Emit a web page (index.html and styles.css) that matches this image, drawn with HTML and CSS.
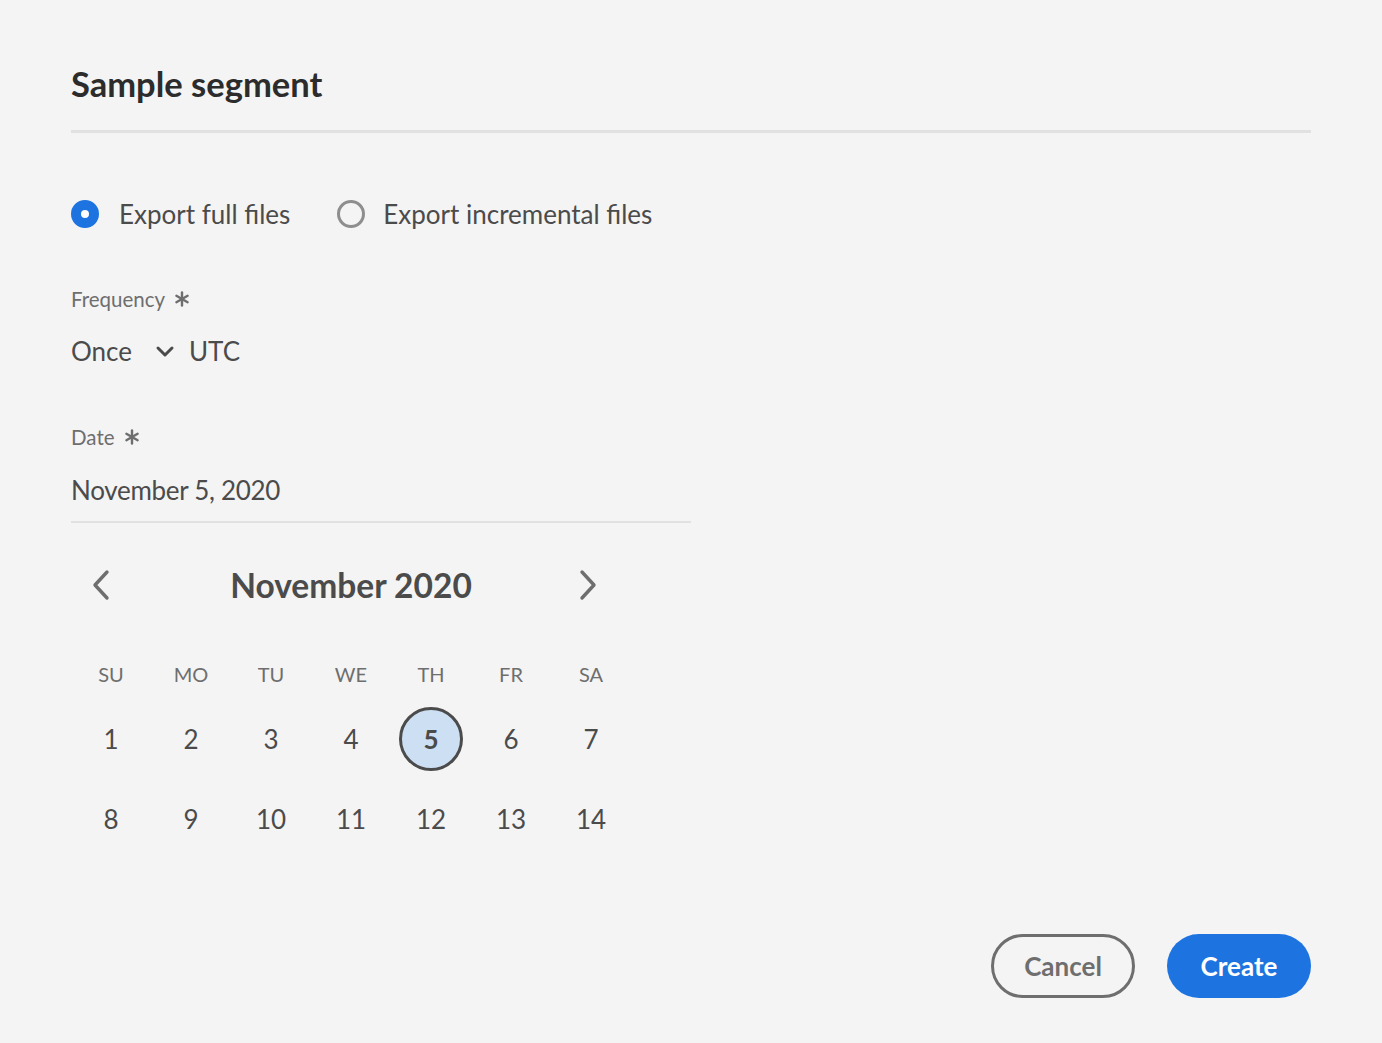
FILE: index.html
```html
<!DOCTYPE html>
<html lang="en">
<head>
<meta charset="utf-8">
<title>Sample segment</title>
<link rel="stylesheet" href="styles.css">
</head>
<body>
<div class="dialog">
  <h1 class="title">Sample segment</h1>
  <div class="divider"></div>

  <div class="radios">
    <label class="radio">
      <span class="radio-btn checked"></span>
      <span class="radio-text">Export full files</span>
    </label>
    <label class="radio">
      <span class="radio-btn"></span>
      <span class="radio-text">Export incremental files</span>
    </label>
  </div>

  <div class="label label-freq">Frequency
    <svg class="req" width="16" height="16" viewBox="0 0 16 16"><g stroke="#6e6e6e" stroke-width="2.4" stroke-linecap="round"><line x1="8" y1="1.5" x2="8" y2="14.5"/><line x1="2.4" y1="4.8" x2="13.6" y2="11.2"/><line x1="2.4" y1="11.2" x2="13.6" y2="4.8"/></g></svg>
  </div>
  <div class="freq-row">
    <span class="value">Once</span>
    <svg class="chev-down" width="20" height="14" viewBox="0 0 20 14"><polyline points="3,4 10,11 17,4" fill="none" stroke="#4b4b4b" stroke-width="3" stroke-linecap="round" stroke-linejoin="round"/></svg>
    <span class="value">UTC</span>
  </div>

  <div class="label label-date">Date
    <svg class="req" width="16" height="16" viewBox="0 0 16 16"><g stroke="#6e6e6e" stroke-width="2.4" stroke-linecap="round"><line x1="8" y1="1.5" x2="8" y2="14.5"/><line x1="2.4" y1="4.8" x2="13.6" y2="11.2"/><line x1="2.4" y1="11.2" x2="13.6" y2="4.8"/></g></svg>
  </div>
  <div class="date-field"><span class="value date-value">November 5, 2020</span></div>

  <div class="calendar">
    <div class="cal-head">
      <button class="nav prev" aria-label="Previous">
        <svg width="20" height="32" viewBox="0 0 20 32"><polyline points="16,3 4,16 16,29" fill="none" stroke="#6e6e6e" stroke-width="3.4" stroke-linecap="round" stroke-linejoin="round"/></svg>
      </button>
      <div class="cal-title">November 2020</div>
      <button class="nav next" aria-label="Next">
        <svg width="20" height="32" viewBox="0 0 20 32"><polyline points="4,3 16,16 4,29" fill="none" stroke="#6e6e6e" stroke-width="3.4" stroke-linecap="round" stroke-linejoin="round"/></svg>
      </button>
    </div>
    <div class="weekdays">
      <span>SU</span><span>MO</span><span>TU</span><span>WE</span><span>TH</span><span>FR</span><span>SA</span>
    </div>
    <div class="days">
      <span class="day">1</span><span class="day">2</span><span class="day">3</span><span class="day">4</span><span class="day selected">5</span><span class="day">6</span><span class="day">7</span>
      <span class="day">8</span><span class="day">9</span><span class="day">10</span><span class="day">11</span><span class="day">12</span><span class="day">13</span><span class="day">14</span>
    </div>
  </div>

  <div class="footer">
    <button class="btn btn-cancel">Cancel</button>
    <button class="btn btn-create">Create</button>
  </div>
</div>
</body>
</html>
```

FILE: styles.css
```css
* { box-sizing: border-box; }
html, body {
  margin: 0;
  padding: 0;
  background: #f4f4f4;
}
body {
  font-family: Lato, "Open Sans", sans-serif;
  color: #4b4b4b;
  width: 1382px;
  height: 1043px;
  overflow: hidden;
}
.dialog {
  padding: 60px 71px 0;
}
.title {
  margin: 0;
  height: 48px;
  line-height: 48px;
  font-size: 34.5px;
  font-weight: 700;
  color: #2c2c2c;
}
.divider {
  margin-top: 22px;
  height: 3px;
  background: #e1e1e1;
}
.radios {
  margin-top: 57px;
  height: 48px;
  display: flex;
  align-items: center;
  gap: 47px;
}
.radio {
  display: flex;
  align-items: center;
  gap: 20px;
}
.radio + .radio { gap: 18px; }
.radio-btn {
  width: 28px;
  height: 28px;
  border-radius: 50%;
  border: 3px solid #8e8e8e;
  background: #f4f4f4;
}
.radio-btn.checked {
  border: 10px solid #1d74e0;
  background: #fff;
}
.radio-text {
  font-size: 26px;
  line-height: 40px;
  color: #4b4b4b;
}
.label {
  height: 24px;
  display: flex;
  align-items: center;
  gap: 9px;
  font-size: 20.5px;
  color: #6e6e6e;
}
.label-freq { margin-top: 49px; }
.label-date { margin-top: 54px; }
.req { display: block; }
.value {
  font-size: 26px;
  line-height: 40px;
  color: #4b4b4b;
}
.freq-row {
  margin-top: 20px;
  height: 40px;
  display: flex;
  align-items: center;
}
.chev-down {
  margin-left: 23px;
  margin-right: 14px;
  display: block;
}
.date-field {
  margin-top: 21px;
  width: 620px;
  height: 53px;
  padding-bottom: 11px;
  border-bottom: 2px solid #e1e1e1;
}
.date-field .value { display: block; }
.date-value { letter-spacing: -0.3px; }
.calendar {
  width: 560px;
  margin-top: 38px;
}
.cal-head {
  height: 48px;
  display: grid;
  grid-template-columns: 1fr auto 1fr;
  align-items: center;
}
.nav {
  border: 0;
  background: none;
  padding: 0;
  width: 40px;
  height: 40px;
  display: flex;
  align-items: center;
  justify-content: center;
  cursor: pointer;
}
.nav.prev { justify-self: start; margin-left: 10px; }
.nav.next { justify-self: end; margin-right: 23px; }
.cal-title {
  font-size: 33.5px;
  font-weight: 700;
  color: #4b4b4b;
}
.weekdays {
  margin-top: 45px;
  height: 40px;
  display: grid;
  grid-template-columns: repeat(7, 80px);
  align-items: center;
  justify-items: center;
  font-size: 20px;
  color: #6e6e6e;
}
.days {
  margin-top: 5px;
  display: grid;
  grid-template-columns: repeat(7, 80px);
  grid-auto-rows: 80px;
  align-items: center;
  justify-items: center;
}
.day {
  width: 64px;
  height: 64px;
  border-radius: 50%;
  display: flex;
  align-items: center;
  justify-content: center;
  font-size: 26px;
  color: #4b4b4b;
}
.day.selected {
  background: #cddff3;
  border: 3px solid #4b4b4b;
  font-weight: 700;
}
.footer {
  margin-top: 75px;
  display: flex;
  justify-content: flex-end;
  gap: 32px;
}
.btn {
  width: 144px;
  height: 64px;
  border-radius: 32px;
  font-family: Lato, "Open Sans", sans-serif;
  font-size: 26px;
  font-weight: 700;
  cursor: pointer;
}
.btn-cancel {
  background: transparent;
  border: 3px solid #6e6e6e;
  color: #6e6e6e;
}
.btn-create {
  background: #1d74e0;
  border: 0;
  color: #fff;
}
```
